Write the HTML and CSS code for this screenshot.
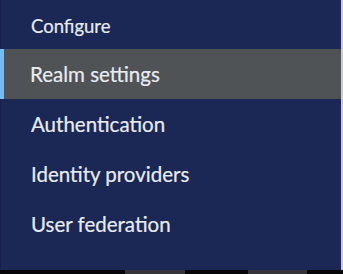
FILE: index.html
```html
<!DOCTYPE html>
<html>
<head>
<meta charset="utf-8">
<link rel="stylesheet" href="styles.css">
</head>
<body>
<div class="frame">
  <nav class="nav">
    <div class="group-title">Configure</div>
    <ul class="list">
      <li class="item active">Realm settings</li>
      <li class="item">Authentication</li>
      <li class="item">Identity providers</li>
      <li class="item">User federation</li>
    </ul>
  </nav>
  <div class="edge"></div>
</div>
<div class="bottom">
  <span class="seg dark w125"></span>
  <span class="seg grey w60"></span>
  <span class="seg dark w63"></span>
  <span class="seg grey w59"></span>
  <span class="seg dark fill"></span>
</div>
</body>
</html>
```
FILE: styles.css
```css
* { box-sizing: border-box; }
html, body { margin: 0; padding: 0; }
body {
  width: 343px;
  height: 274px;
  overflow: hidden;
  background: #1b2754;
  font-family: Lato, "Noto Sans", sans-serif;
  color: #e8ecf2;
  -webkit-text-stroke: 0.2px #e8ecf2;
}
.frame {
  display: flex;
  height: 270px;
}
.nav {
  flex: 1;
  background: #1b2754;
  border-left: 1px solid #16204a;
}
.edge {
  width: 2px;
  background: #c9ccd2;
}
.group-title {
  height: 49px;
  padding-left: 30px;
  padding-top: 2px;
  display: flex;
  align-items: center;
  font-size: 18.5px;
}
.list {
  list-style: none;
  margin: 0;
  padding: 0;
}
.item {
  height: 50px;
  display: flex;
  align-items: center;
  padding-left: 30px;
  font-size: 20.5px;
}
.item.active {
  background: #505356;
  border-left: 4px solid #73bcf7;
  padding-left: 26px;
  margin-left: -1px;
}
.bottom {
  display: flex;
  height: 4px;
}
.seg { display: block; height: 4px; }
.dark { background: #050608; }
.grey { background: #333539; }
.w125 { width: 125px; }
.w60 { width: 60px; }
.w63 { width: 63px; }
.w59 { width: 59px; }
.fill { flex: 1; }
```
